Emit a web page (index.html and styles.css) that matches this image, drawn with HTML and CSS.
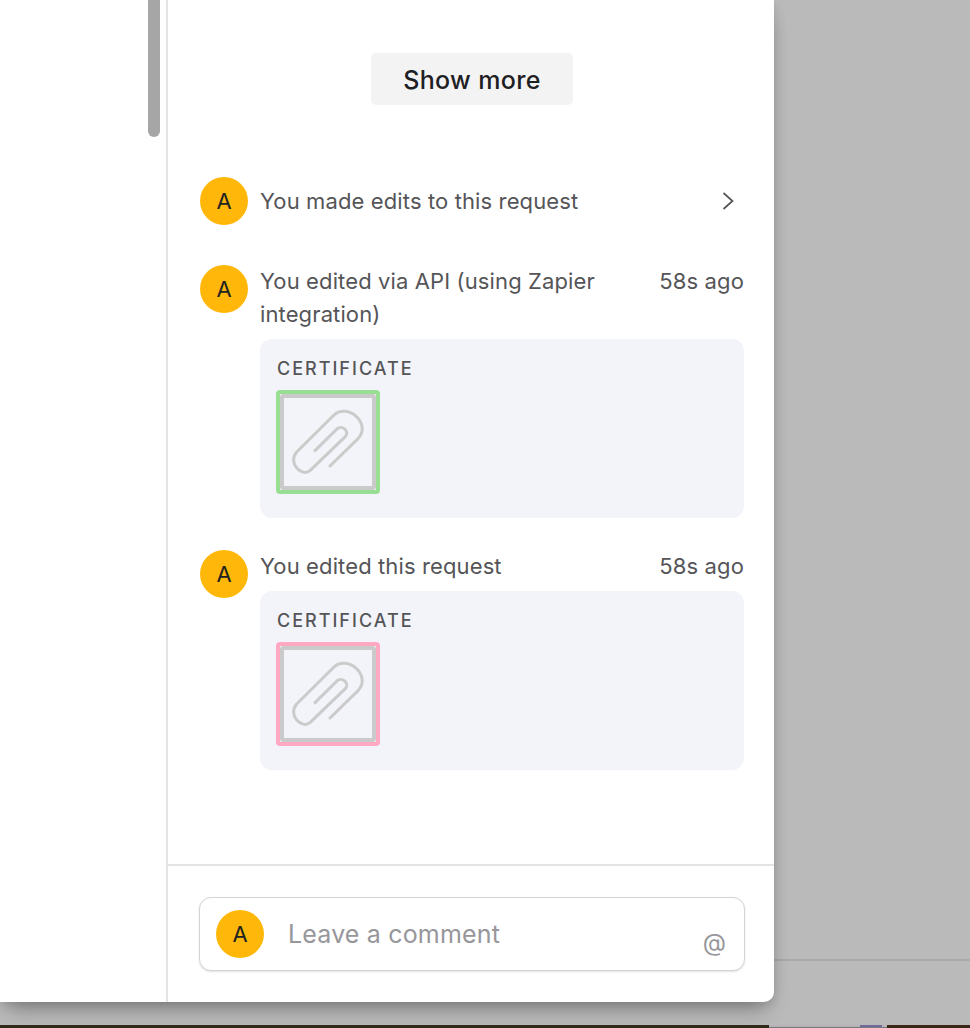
FILE: index.html
```html
<!DOCTYPE html>
<html>
<head>
<meta charset="utf-8">
<title>Request activity</title>
<link rel="stylesheet" href="styles.css">
</head>
<body>
  <div class="screen">
    <div class="modal">
      <div class="sidebar">
        <div class="scroll-thumb"></div>
      </div>
      <div class="main">
        <div class="feed">
          <div class="more-row">
            <button class="show-more">Show more</button>
          </div>

          <div class="event event-collapsed">
            <div class="avatar">A</div>
            <div class="event-body">
              <div class="event-head">
                <span class="event-title">You made edits to this request</span>
                <svg class="chevron" viewBox="0 0 12 20" width="12" height="20"><path d="M1.5 2 L10.5 10 L1.5 18" fill="none" stroke="#555" stroke-width="1.7"/></svg>
              </div>
            </div>
          </div>

          <div class="event event-api">
            <div class="avatar">A</div>
            <div class="event-body">
              <div class="event-head">
                <span class="event-title">You edited via API (using Zapier integration)</span>
                <span class="event-time">58s ago</span>
              </div>
              <div class="change-card">
                <div class="field-label">CERTIFICATE</div>
                <div class="attachment added">
                  <div class="attachment-inner">
                    <svg viewBox="90 192 240 240" width="80" height="80"><path class="clip" d="M165 332 L232 266 C246 254 270 274 256 290 L150 392 C125 412 82 370 110 336 L222 225 C262 188 335 250 295 295 L210 378"/></svg>
                  </div>
                </div>
              </div>
            </div>
          </div>

          <div class="event event-manual">
            <div class="avatar">A</div>
            <div class="event-body">
              <div class="event-head">
                <span class="event-title">You edited this request</span>
                <span class="event-time">58s ago</span>
              </div>
              <div class="change-card">
                <div class="field-label">CERTIFICATE</div>
                <div class="attachment removed">
                  <div class="attachment-inner">
                    <svg viewBox="90 192 240 240" width="80" height="80"><path class="clip" d="M165 332 L232 266 C246 254 270 274 256 290 L150 392 C125 412 82 370 110 336 L222 225 C262 188 335 250 295 295 L210 378"/></svg>
                  </div>
                </div>
              </div>
            </div>
          </div>
        </div>

        <div class="composer">
          <div class="comment-box">
            <div class="avatar">A</div>
            <span class="placeholder">Leave a comment</span>
            <span class="mention">@</span>
          </div>
        </div>
      </div>
    </div>
    <div class="backdrop"></div>
  </div>
  <div class="desktop-strip">
    <div class="strip-left"></div>
    <div class="strip-window"><div class="strip-tab"></div></div>
    <div class="strip-right"></div>
  </div>
</body>
</html>
```

FILE: styles.css
```css
html, body {
  margin: 0;
  height: 100%;
  overflow: hidden;
}
body {
  display: flex;
  flex-direction: column;
  background: #bababa;
  font-family: "Inter", "Liberation Sans", sans-serif;
  color: #555558;
}
.screen {
  display: flex;
  height: 1025px;
  align-items: flex-start;
}
.modal {
  position: relative;
  z-index: 2;
  display: flex;
  flex: none;
  width: 774px;
  height: 1002px;
  background: #fff;
  border-bottom-right-radius: 10px;
  box-shadow: 0 3px 12px rgba(0, 0, 0, 0.13), 0 14px 22px -8px rgba(0, 0, 0, 0.3);
}
.backdrop {
  flex: 1;
  height: 959px;
  border-bottom: 2px solid #a9abab;
}
.desktop-strip {
  position: relative;
  z-index: 3;
  display: flex;
  height: 3px;
}
.strip-left {
  width: 769px;
  background: #2e2a1c;
}
.strip-window {
  display: flex;
  justify-content: flex-end;
  box-sizing: border-box;
  width: 118px;
  padding-right: 5px;
  background: #b4b4b6;
  border-bottom: 1px solid #77777c;
}
.strip-tab {
  width: 22px;
  background: #6f6a9a;
}
.strip-right {
  flex: 1;
  background: #3a2616;
}
.sidebar {
  flex: none;
  width: 166px;
  border-right: 2px solid #e4e4e4;
}
.scroll-thumb {
  width: 12px;
  height: 137px;
  margin-left: 148px;
  background: #a6a6a6;
  border-radius: 0 0 6px 6px;
}
.main {
  flex: 1;
  display: flex;
  flex-direction: column;
  min-width: 0;
}
.feed {
  flex: 1;
  padding: 53px 30px 0 32px;
}
.more-row {
  display: flex;
  justify-content: center;
  margin-bottom: 72px;
}
.show-more {
  width: 202px;
  height: 52px;
  padding: 2px 0 0;
  border: 0;
  border-radius: 5px;
  background: #f3f3f3;
  color: #1f2023;
  font-family: inherit;
  font-size: 25px;
  font-weight: 500;
  letter-spacing: 0.35px;
}
.event {
  display: flex;
  gap: 12px;
  margin-bottom: 40px;
}
.event-api {
  margin-bottom: 32px;
}
.event-manual {
  margin-bottom: 0;
}
.avatar {
  flex: none;
  width: 48px;
  height: 48px;
  border-radius: 50%;
  background: #ffb80a;
  color: #222;
  font-size: 22px;
  line-height: 48px;
  text-align: center;
}
.event-body {
  flex: 1;
  min-width: 0;
}
.event-head {
  display: flex;
  justify-content: space-between;
  align-items: flex-start;
  gap: 40px;
  font-size: 22px;
  line-height: 33px;
  letter-spacing: 0.12px;
}
.event-collapsed .event-head {
  align-items: center;
  height: 48px;
  padding-right: 10px;
}
.event-time {
  flex: none;
}
.event-api .event-title {
  max-width: 360px;
}
.change-card {
  height: 179px;
  box-sizing: border-box;
  margin-top: 8px;
  padding: 19px 16px 0;
  background: #f3f4f9;
  border-radius: 12px;
}
.field-label {
  padding-left: 1px;
  font-size: 18px;
  font-weight: 500;
  line-height: 22px;
  letter-spacing: 2px;
}
.attachment {
  box-sizing: border-box;
  width: 104px;
  height: 104px;
  margin-top: 10px;
  border: 4px solid #98de93;
  border-radius: 4px;
  background: #e6e8ea;
}
.attachment.removed {
  border-color: #ffa8c4;
}
.attachment-inner {
  box-sizing: border-box;
  width: 96px;
  height: 96px;
  padding: 6px;
  background: #f3f4f9;
  border: 4px solid #cacaca;
  border-radius: 4px;
}
.attachment-inner svg {
  display: block;
}
.clip {
  fill: none;
  stroke: #cbcbcb;
  stroke-width: 9;
  stroke-linecap: round;
  stroke-linejoin: round;
}
.composer {
  flex: none;
  height: 138px;
  box-sizing: border-box;
  padding: 31px 29px 0 31px;
  border-top: 2px solid #e4e4e4;
}
.comment-box {
  display: flex;
  align-items: center;
  box-sizing: border-box;
  height: 74px;
  padding: 0 16px;
  background: #fff;
  border: 1px solid #d4d4d6;
  border-radius: 12px;
  box-shadow: 0 1px 2px rgba(0, 0, 0, 0.12);
}
.placeholder {
  flex: 1;
  margin-left: 24px;
  color: #96969b;
  font-size: 25px;
  letter-spacing: 0.17px;
}
.mention {
  align-self: flex-end;
  margin-right: 2px;
  margin-bottom: 13px;
  color: #96969b;
  font-size: 24px;
}
```
